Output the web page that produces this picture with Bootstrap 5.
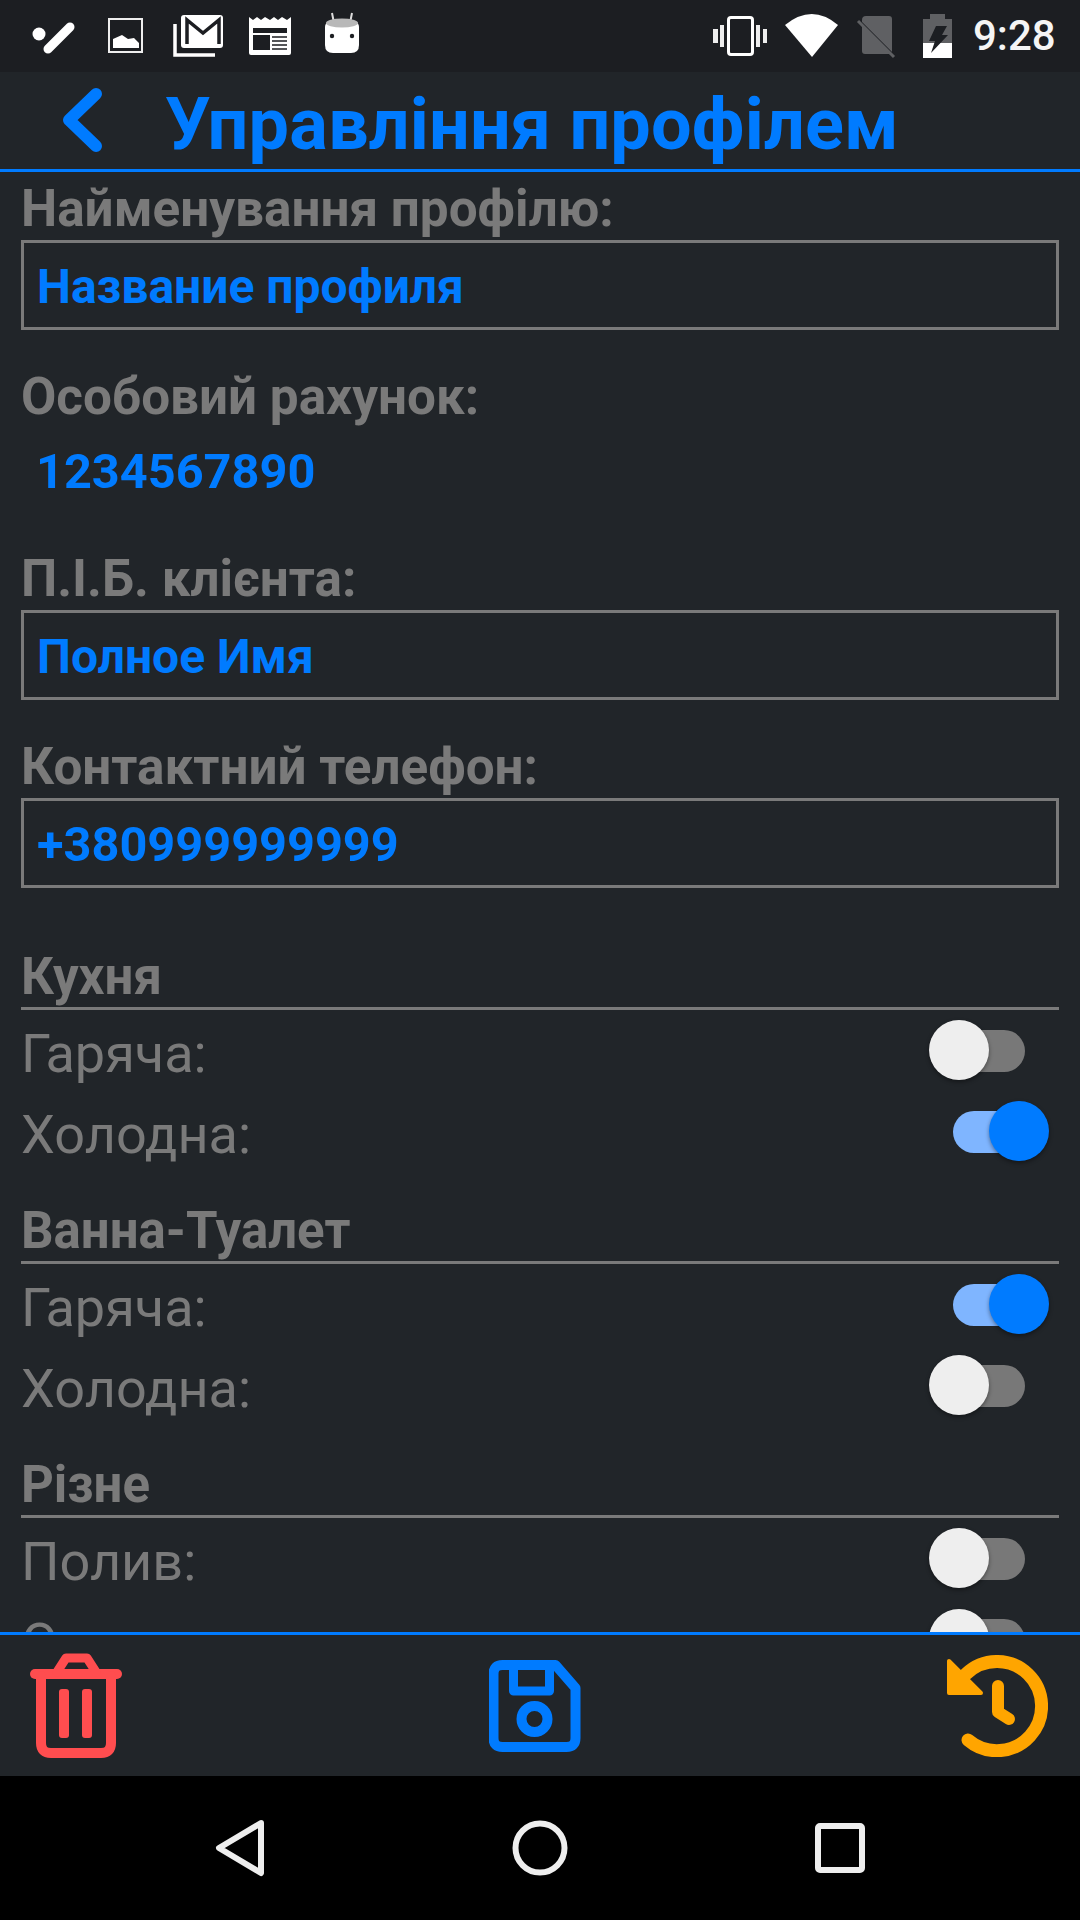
<!DOCTYPE html>
<html lang="uk">

<head>
    <meta charset="UTF-8">
    <meta name="viewport" content="width=device-width, initial-scale=1.0">
    <title>Управління профілем</title>
    <link href="https://cdn.jsdelivr.net/npm/bootstrap@5.3.0/dist/css/bootstrap.min.css" rel="stylesheet">
    <style>
        html, body {
            height: 100%;
        }

        body {
            background-color: #212529;
            font-family: Roboto, sans-serif;
            overflow: hidden;
        }

        svg {
            display: block;
        }

        .screen {
            height: 1920px;
        }

        .status-bar {
            height: 72px;
            background-color: #1c1e22;
            padding-left: 28px;
        }

        .clock {
            font-size: 42px;
            font-weight: 500;
            color: #f5f5f5;
            width: 115px;
            padding-left: 8px;
            line-height: 74px;
        }

        .top-bar {
            height: 100px;
            border-bottom: 3px solid #007bff;
        }

        .page-title {
            font-size: 72px;
            font-weight: 700;
            letter-spacing: .18px;
            line-height: 84px;
            color: #007bff;
            margin: 9px 0 0 53px;
        }

        .profile-scroll {
            padding: 0 21px;
            overflow: hidden;
            min-height: 0;
        }

        .profile-scroll > * {
            flex-shrink: 0;
        }

        .fld-label {
            font-size: 51.25px;
            font-weight: 700;
            line-height: 54px;
            margin-bottom: 2px;
            color: #7a7a7a;
        }

        .fld-box {
            height: 90px;
            margin-top: 2px;
            border: 3px solid #7a7a7a;
            padding-left: 13px;
            font-size: 48px;
            font-weight: 700;
            line-height: 87px;
            color: #007bff;
        }

        .fld-plain {
            margin-top: 18px;
            margin-bottom: -1px;
            padding-left: 15px;
            font-size: 48.7px;
            font-weight: 700;
            line-height: 56px;
            color: #007bff;
        }

        .fld-phone {
            font-size: 48.7px;
        }

        .first-label { margin-top: 10px; }
        .gap-m { margin-top: 40px; }
        .gap-l { margin-top: 53px; }
        .gap-xl { margin-top: 63px; }

        .group-title {
            font-size: 51px;
            font-weight: 700;
            line-height: 51px;
            color: #7a7a7a;
            border-bottom: 3px solid #7a7a7a;
            height: 59px;
        }

        .group-next {
            margin-top: 33px;
        }

        .tap-row {
            height: 81px;
            font-size: 54px;
            color: #7a7a7a;
        }

        .tap-name {
            padding-top: 5px;
        }

        .tgl {
            position: relative;
            display: block;
            width: 120px;
            height: 60px;
            margin: 0 10px 1px 0;
        }

        .tgl-track {
            position: absolute;
            left: 24px;
            top: 10px;
            width: 72px;
            height: 42px;
            border-radius: 21px;
            background-color: #787878;
        }

        .tgl-thumb {
            position: absolute;
            left: 0;
            top: 0;
            width: 60px;
            height: 60px;
            border-radius: 50%;
            background-color: #eeeeee;
            box-shadow: 0 2px 4px rgba(0, 0, 0, .4);
        }

        .tgl.on .tgl-track {
            background-color: #7fb5ff;
        }

        .tgl.on .tgl-thumb {
            left: 60px;
            background-color: #007bff;
        }

        .action-bar {
            height: 144px;
            border-top: 3px solid #007bff;
            padding: 0 32px 0 30px;
        }

        .nav-bar {
            height: 144px;
            background-color: #000;
            gap: 240px;
        }
    </style>
</head>

<body>
    <div class="screen d-flex flex-column">

        <div class="status-bar d-flex align-items-center flex-shrink-0">
            <svg width="62" height="72" viewBox="28 0 62 72">
                <circle cx="39" cy="34" r="6.5" fill="#fff" />
                <path d="M48 49L70 27" stroke="#fff" stroke-width="9" stroke-linecap="round" />
            </svg>
            <svg width="68" height="72" viewBox="90 0 68 72">
                <rect x="109" y="19" width="33" height="33" fill="none" stroke="#eee" stroke-width="2" />
                <path d="M113 48V39L122 35L128 39L134 38L139 43V48Z" fill="#fff" />
            </svg>
            <svg width="78" height="72" viewBox="158 0 78 72">
                <rect x="181" y="15" width="42" height="33" rx="3" fill="#fff" />
                <path d="M187 44V20L203 33L219 20V44" fill="none" stroke="#1c1e22" stroke-width="3.5" />
                <path d="M175 24V55H215" fill="none" stroke="#fff" stroke-width="3.5" />
            </svg>
            <svg width="72" height="72" viewBox="236 0 72 72">
                <path d="M249 17L253 20L257 17L261 20L265 17L270 20L274 17L278 20L282 17L287 20L291 17V53Q291 55 289 55H251Q249 55 249 53Z" fill="#fff" />
                <rect x="253" y="28" width="34" height="5" fill="#1c1e22" />
                <rect x="253" y="35" width="17" height="15" fill="#1c1e22" />
                <path d="M272 37H287M272 41H287M272 45H287M272 49H287" stroke="#1c1e22" stroke-width="1.6" />
            </svg>
            <svg width="68" height="72" viewBox="308 0 68 72">
                <path d="M332 13L334 23M352 13L350 23" stroke="#ddd" stroke-width="2" />
                <path d="M325 27Q325 19 342 19Q359 19 359 27V45Q359 53 351 53H333Q325 53 325 45Z" fill="#fff" />
                <ellipse cx="342" cy="23" rx="16" ry="4.5" fill="#b8b8b8" />
                <circle cx="332" cy="36" r="2.2" fill="#1c1e22" />
                <circle cx="352" cy="36" r="2.2" fill="#1c1e22" />
            </svg>
            <div class="flex-grow-1"></div>
            <svg width="70" height="72" viewBox="705 0 70 72">
                <rect x="728.5" y="17.5" width="24" height="37" rx="2.5" fill="none" stroke="#fff" stroke-width="3" />
                <path d="M713 29h5v14h-5zM720 25h4v22h-4zM756 25h4v22h-4zM763 29h4v14h-4z" fill="#eee" />
            </svg>
            <svg width="75" height="72" viewBox="775 0 75 72">
                <path d="M812 57L785 25Q812 3 838 25Z" fill="#fff" />
            </svg>
            <svg width="60" height="72" viewBox="850 0 60 72">
                <path d="M866 16H889Q892 16 892 19V54H865Q862 54 862 51V20Q862 16 866 16Z" fill="#5f6063" />
                <path d="M857 19L895 57" stroke="#1c1e22" stroke-width="3" />
                <path d="M858 21L894 57" stroke="#5f6063" stroke-width="3" />
            </svg>
            <svg width="55" height="72" viewBox="910 0 55 72">
                <path d="M930 14H945V19H952V43H923V19H930Z" fill="#5f6063" />
                <rect x="923" y="43" width="29" height="15" fill="#fff" />
                <path d="M936 26H947L942 35H948L931 53L935 41H929Z" fill="#1c1e22" />
            </svg>
            <div class="clock">9:28</div>
        </div>

        <div class="top-bar d-flex align-items-center flex-shrink-0">
            <svg width="112" height="100" viewBox="0 72 112 100">
                <path d="M96 95L69 121L96 147" fill="none" stroke="#007bff" stroke-width="12" stroke-linecap="round" stroke-linejoin="round" />
            </svg>
            <h1 class="page-title">Управління профілем</h1>
        </div>

        <div class="profile-scroll flex-grow-1 d-flex flex-column">
            <div class="fld-label first-label">Найменування профілю:</div>
            <div class="fld-box">Название профиля</div>

            <div class="fld-label gap-m">Особовий рахунок:</div>
            <div class="fld-plain">1234567890</div>

            <div class="fld-label gap-l">П.І.Б. клієнта:</div>
            <div class="fld-box">Полное Имя</div>

            <div class="fld-label gap-m">Контактний телефон:</div>
            <div class="fld-box fld-phone">+380999999999</div>

            <div class="group-title gap-xl">Кухня</div>
            <div class="tap-row d-flex align-items-center justify-content-between">
                <span class="tap-name">Гаряча:</span>
                <span class="tgl"><span class="tgl-track"></span><span class="tgl-thumb"></span></span>
            </div>
            <div class="tap-row d-flex align-items-center justify-content-between">
                <span class="tap-name">Холодна:</span>
                <span class="tgl on"><span class="tgl-track"></span><span class="tgl-thumb"></span></span>
            </div>

            <div class="group-title group-next">Ванна-Туалет</div>
            <div class="tap-row d-flex align-items-center justify-content-between">
                <span class="tap-name">Гаряча:</span>
                <span class="tgl on"><span class="tgl-track"></span><span class="tgl-thumb"></span></span>
            </div>
            <div class="tap-row d-flex align-items-center justify-content-between">
                <span class="tap-name">Холодна:</span>
                <span class="tgl"><span class="tgl-track"></span><span class="tgl-thumb"></span></span>
            </div>

            <div class="group-title group-next">Різне</div>
            <div class="tap-row d-flex align-items-center justify-content-between">
                <span class="tap-name">Полив:</span>
                <span class="tgl"><span class="tgl-track"></span><span class="tgl-thumb"></span></span>
            </div>
            <div class="tap-row d-flex align-items-center justify-content-between">
                <span class="tap-name">Опалення:</span>
                <span class="tgl"><span class="tgl-track"></span><span class="tgl-thumb"></span></span>
            </div>
        </div>

        <div class="action-bar d-flex align-items-center justify-content-between flex-shrink-0">
            <svg width="92" height="105" viewBox="30 1653 92 105" aria-label="Видалити">
                <g fill="none" stroke="#ff4d4f" stroke-width="10" stroke-linecap="round" stroke-linejoin="round">
                    <path d="M35 1674H117" />
                    <path d="M57 1672L66 1658H87L96 1672" stroke-width="9" />
                    <path d="M41 1676V1743Q41 1753 51 1753H101Q111 1753 111 1743V1676" />
                </g>
                <rect x="59" y="1689" width="10" height="49" rx="3" fill="#ff4d4f" />
                <rect x="82" y="1689" width="10" height="49" rx="3" fill="#ff4d4f" />
            </svg>
            <svg width="92" height="92" viewBox="488.5 1660 92 92" aria-label="Зберегти">
                <g fill="none" stroke="#007bff" stroke-width="10" stroke-linejoin="round">
                    <path d="M502 1665H555L575 1688V1738Q575 1747 566 1747H502Q493 1747 493 1738V1674Q493 1665 502 1665Z" />
                    <path d="M513 1665V1691H549V1665" stroke-width="9" />
                    <circle cx="534" cy="1719" r="13" />
                </g>
            </svg>
            <svg width="101" height="102" viewBox="947 1654 101 102" aria-label="Скинути">
                <g fill="none" stroke="#ffa500" stroke-linecap="round">
                    <path d="M968 1739A44.6 44.6 0 1 0 966 1673" stroke-width="13" />
                    <path d="M998 1685V1711L1009 1718" stroke-width="12" stroke-linejoin="round" />
                </g>
                <path d="M949 1660V1692H981Z" fill="#ffa500" stroke="#ffa500" stroke-width="4" stroke-linejoin="round" />
            </svg>
        </div>

        <div class="nav-bar d-flex align-items-center justify-content-center flex-shrink-0">
            <svg width="60" height="60" viewBox="210 1818 60 60">
                <path d="M261 1823L219 1848L261 1873Z" fill="none" stroke="#eee" stroke-width="6" stroke-linejoin="round" />
            </svg>
            <svg width="60" height="60" viewBox="510 1818 60 60">
                <circle cx="540" cy="1848" r="24.5" fill="none" stroke="#eee" stroke-width="6" />
            </svg>
            <svg width="60" height="60" viewBox="810 1818 60 60">
                <rect x="818" y="1826" width="44" height="44" rx="2" fill="none" stroke="#eee" stroke-width="6" />
            </svg>
        </div>
    </div>

    <script src="https://cdn.jsdelivr.net/npm/bootstrap@5.3.0/dist/js/bootstrap.bundle.min.js"></script>
</body>

</html>
